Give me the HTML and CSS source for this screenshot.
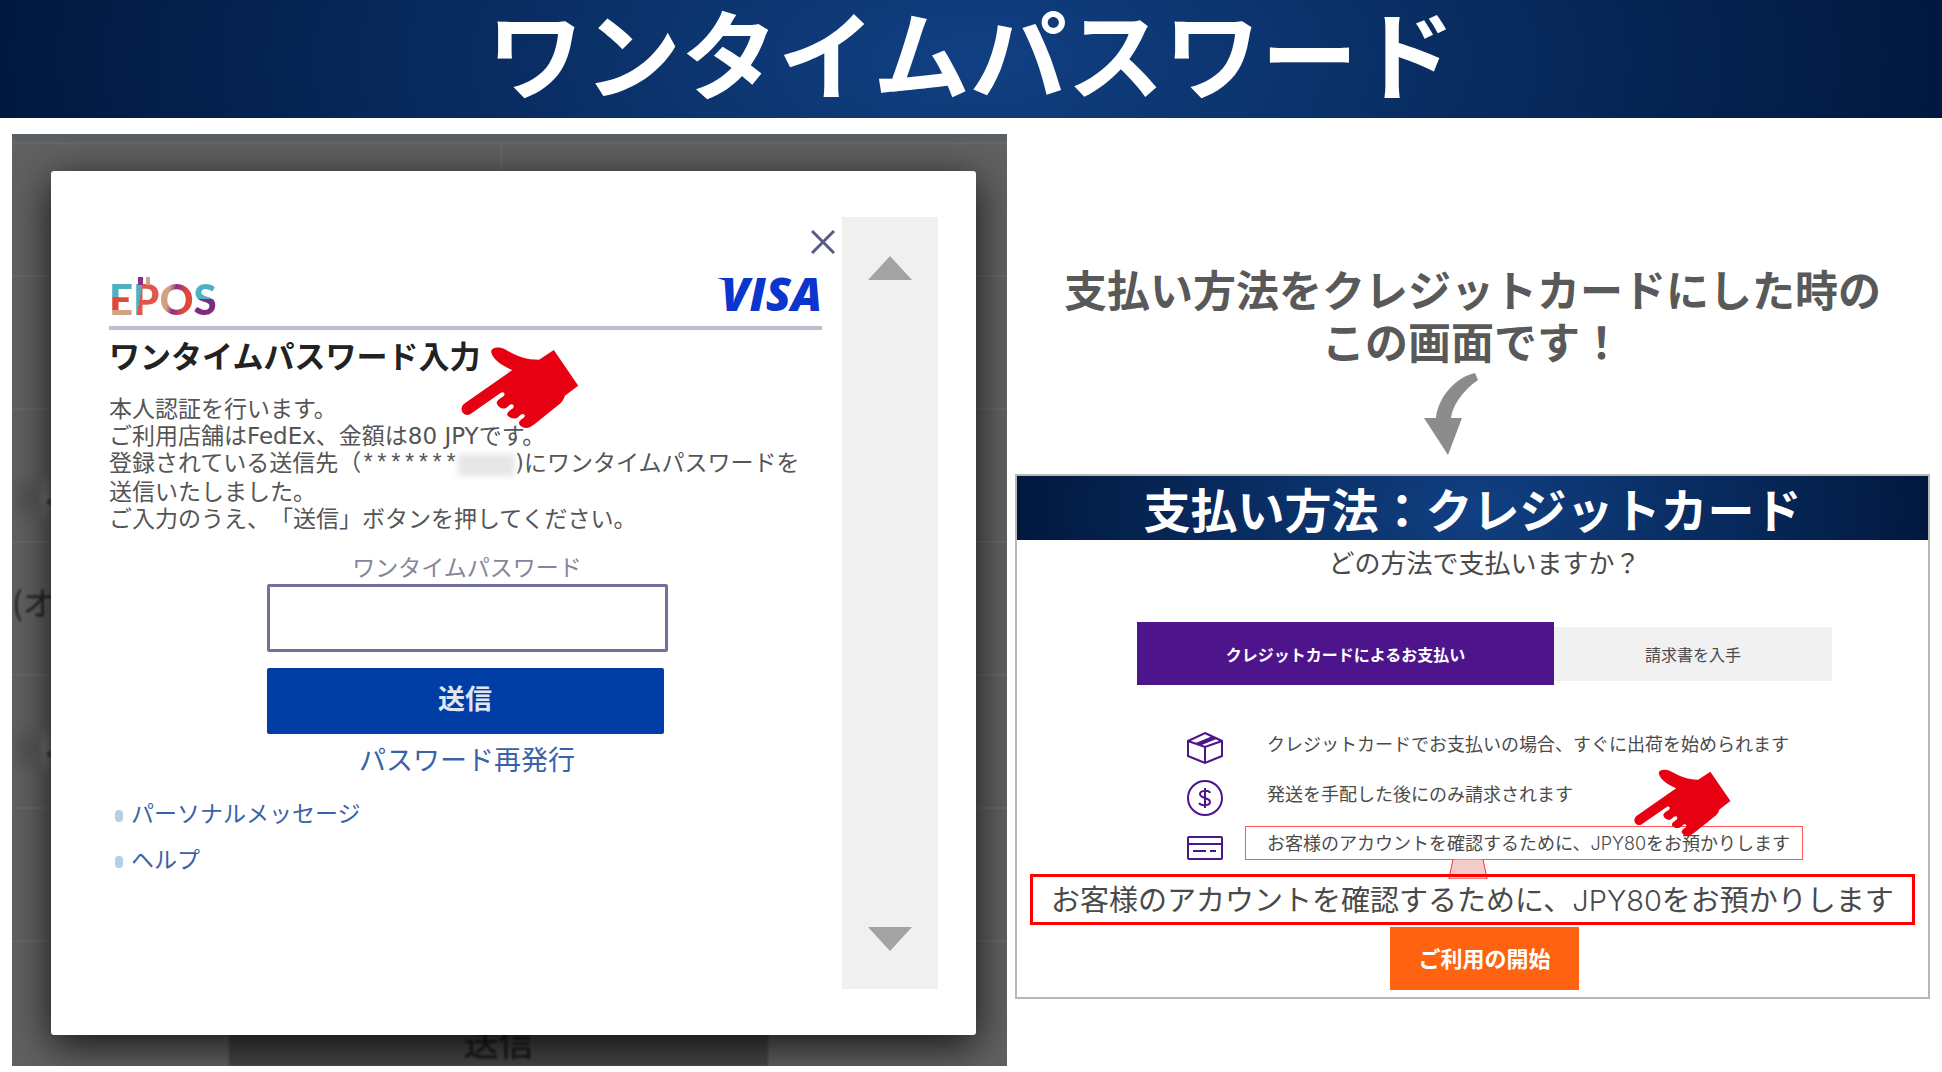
FILE: index.html
```html
<!DOCTYPE html>
<html lang="ja">
<head>
	<meta charset="utf-8">
	<title>ワンタイムパスワード</title>
	<meta name="viewport" content="width=device-width, initial-scale=1">
	<link rel="stylesheet" href="styles.css">
</head>
<body>

	<svg class="symbols" aria-hidden="true">
		<symbol id="hand" viewBox="64 82 352 242">
			<path d="M154 98C152 84 176 79 195 89C230 108 255 120 297 120L341 91L414 198L374 228C371 238 368 243 362 249L285 311C268 325 255 328 242 318C232 309 238 302 252 293C258 285 250 279 243 284L235 291C226 299 210 296 203 287C198 280 206 274 219 265C225 256 217 249 209 255L202 261C192 271 176 264 171 252C168 244 176 238 191 229C198 221 190 214 183 219L92 282C78 292 60 276 67 260Q68 256 74 251L217 151C190 140 160 122 154 98Z"/>
		</symbol>
	</svg>

	<header class="banner">
		<h1>ワンタイムパスワード</h1>
	</header>

	<main class="slide">
		<section class="backdrop">
			<span class="ghost ghost-text">(オ</span>
			<span class="ghost ghost-smudge"></span>
			<span class="ghost ghost-smudge low"></span>
			<span class="ghost ghost-button">送信</span>

			<div class="dialog">
				<div class="dialog-body">
					<button class="close" type="button" aria-label="閉じる">
						<svg viewBox="0 0 24 24"><path d="M1 1L23 23M23 1L1 23"/></svg>
					</button>
					<div class="brands">
						<div class="epos"><span class="e">E</span><span class="p">P</span><span class="o">O</span><span class="s">S</span></div>
						<div class="visa">VISA</div>
					</div>
					<h2><span class="pointed">ワンタイムパスワード入力<svg class="hand"><use href="#hand"/></svg></span></h2>
					<p class="message">本人認証を行います。<br>
						ご利用店舗はFedEx、金額は80 JPYです。<br>
						登録されている送信先（<span class="stars">*******</span><span class="masked"></span>)にワンタイムパスワードを<br>
						送信いたしました。<br>
						ご入力のうえ、「送信」ボタンを押してください。</p>
					<form class="otp">
						<label for="otp">ワンタイムパスワード</label>
						<input id="otp" type="text">
						<button type="button">送信</button>
						<a href="#">パスワード再発行</a>
					</form>
					<ul class="more">
						<li><a href="#">パーソナルメッセージ</a></li>
						<li><a href="#">ヘルプ</a></li>
					</ul>
				</div>
				<div class="scroll">
					<svg viewBox="0 0 44 24"><path d="M22 0L44 24H0Z"/></svg>
					<svg viewBox="0 0 44 24"><path d="M0 0H44L22 24Z"/></svg>
				</div>
			</div>
		</section>

		<section class="guide">
			<p class="caption">支払い方法をクレジットカードにした時の<br>この画面です！</p>
			<svg class="arrow" viewBox="0 0 98 82"><path d="M51 0L54 7C38 18 28 34 27 45H38L24 82L0 45H12C14 24 32 4 51 0Z"/></svg>

			<div class="card">
				<h2>支払い方法：クレジットカード</h2>
				<div class="payment">
					<p class="question">どの方法で支払いますか？</p>
					<div class="tabs">
						<button class="tab active" type="button">クレジットカードによるお支払い</button>
						<button class="tab" type="button">請求書を入手</button>
					</div>
					<ul class="notes">
						<li>
							<svg viewBox="0 0 36 36"><path d="M18 3L35 11V26L18 33L1 26V11ZM1 11L18 17L35 11M18 17V33M9 14L26 7M13 5M12 15L29 8"/></svg>
							<span>クレジットカードでお支払いの場合、すぐに出荷を始められます</span>
						</li>
						<li>
							<svg viewBox="0 0 36 36"><circle cx="18" cy="18" r="17"/><path d="M18 8V28M23 13C22 10 13 10 13 14C13 19 23 17 23 22C23 26 14 26 12 23"/></svg>
							<span>発送を手配した後にのみ請求されます</span>
							<svg class="hand small"><use href="#hand"/></svg>
						</li>
						<li>
							<svg viewBox="0 0 36 36"><rect x="1" y="7" width="34" height="22" rx="1"/><path d="M1 14H35M6 21H19M23 21H29"/></svg>
							<span class="marked">お客様のアカウントを確認するために、<span class="latin">JPY80</span>をお預かりします<svg class="link" viewBox="0 0 40 20"><path d="M5 0H35L39 20H1Z"/></svg></span>
						</li>
					</ul>
				</div>
				<p class="enlarged">お客様のアカウントを確認するために、<span class="latin">JPY80</span>をお預かりします</p>
				<div class="actions">
					<button class="start" type="button">ご利用の開始</button>
				</div>
			</div>
		</section>
	</main>

</body>
</html>
```

FILE: styles.css
```css
:root {
	--navy: radial-gradient(ellipse 52% 400% at 50% 50%, #114083, #00173c);
	--purple: #4d148c;
	--red: #e60012;
}

* { box-sizing: border-box; }

body {
	margin: 0;
	background: #fff;
	font-family: "Noto Sans CJK JP", sans-serif;
	text-spacing-trim: space-all;
}

h1, h2, p, ul { margin: 0; padding: 0; }
ul { list-style: none; }
button { border: 0; padding: 0; font-family: inherit; cursor: pointer; }
svg { display: block; }

.symbols { position: absolute; width: 0; height: 0; }

.hand {
	position: absolute;
	width: 118px;
	height: 81px;
	fill: var(--red);
}

/* title */
.banner {
	padding-bottom: 18px;
	background: var(--navy);
	color: #fff;
	text-align: center;
}

.banner h1 {
	font-size: 97px;
	line-height: 100px;
	font-weight: 700;
}

.slide {
	display: grid;
	grid-template-columns: 995fr 915fr;
	gap: 8px;
	padding: 16px 12px 7px;
	align-items: start;
}

/* left: one time password dialog */
.backdrop {
	position: relative;
	overflow: hidden;
	padding: 37px 31px 31px 39px;
	background:
		linear-gradient(#5a5f66 4px, transparent 10px),
		linear-gradient(#686868, #686868) 488px 0 / 2px 100% no-repeat,
		linear-gradient(#686868 2px, transparent 2px) 0 8px / 100% 133px,
		#616161;
}

.ghost { position: absolute; filter: blur(1px); }
.ghost-text { left: 0; top: 444px; font-size: 32px; color: #222; }
.ghost-smudge {
	left: 0;
	top: 336px;
	width: 40px;
	height: 56px;
	background:
		radial-gradient(3px 4px at 37px 32px, #1c1c1c, transparent),
		radial-gradient(8px 26px at 34px 28px, #777, transparent),
		radial-gradient(20px 28px at 14px 28px, #545454, transparent);
}
.ghost-smudge.low { top: 588px; }
.ghost-button {
	left: 217px;
	right: 239px;
	bottom: 0;
	height: 44px;
	background: #464646;
	color: #1c1c1c;
	font-size: 35px;
	line-height: 38px;
	font-weight: 500;
	text-align: center;
}

.dialog {
	position: relative;
	display: flex;
	padding: 46px 38px 46px 58px;
	border-radius: 3px;
	background: #fff;
	box-shadow: 0 10px 40px rgba(0, 0, 0, .8);
}

.dialog-body {
	flex: 1;
	padding: 13px 20px 117px 0;
}

.close {
	display: block;
	margin: 0 -13px 0 auto;
	width: 24px;
	height: 24px;
	background: none;
}
.close svg { stroke: #5a5a86; stroke-width: 3; }

.brands {
	display: flex;
	justify-content: space-between;
	align-items: center;
	height: 76px;
	padding-top: 6px;
	border-bottom: 4px solid #c0bdd0;
}

.epos { padding-top: 11px; font: 900 42px/48px Lato, sans-serif; }
.epos span {
	position: relative;
	color: transparent;
	-webkit-background-clip: text;
	background-clip: text;
}
.epos .e { background-image: linear-gradient(#4fb0bf 46%, #e0483c 46%, #e0483c 72%, #d2a283 72%); }
.epos .p { background-image: linear-gradient(100deg, #4fb0bf 32%, #e0564a 32%); }
.epos .o { background-image: linear-gradient(100deg, #d2a283 30%, #8c2f83 45%, #e0483c 70%); }
.epos .s { background-image: linear-gradient(#4fb0bf 50%, #7b2b80 50%); }
.epos .p::before {
	content: "";
	position: absolute;
	left: 5px;
	top: 3px;
	width: 12px;
	height: 8px;
	background: linear-gradient(90deg, #8c2f83 5px, transparent 5px, transparent 8px, #d2a283 8px);
}

.visa {
	position: relative;
	color: #0b35cc;
	font: italic 800 46px/48px "Open Sans", sans-serif;
}
.visa::before {
	content: "";
	position: absolute;
	left: -4px;
	top: 9px;
	width: 14px;
	height: 8px;
	background: #0b35cc;
	clip-path: polygon(0 0, 100% 0, 100% 100%, 60% 35%);
}

.dialog h2 {
	padding: 5px 0 6px;
	color: #222;
	font-size: 31px;
	line-height: 40px;
}
.pointed { position: relative; }
.pointed .hand { left: 352px; top: 15px; }

.message {
	padding-top: 15px;
	color: #555;
	font-family: "DejaVu Sans", "Noto Sans CJK JP", sans-serif;
	font-size: 23px;
	line-height: 27px;
	white-space: nowrap;
}
.stars { font-family: "Liberation Mono", monospace; }
.masked {
	display: inline-block;
	width: 57px;
	height: 22px;
	vertical-align: middle;
	background: #e6e6e9;
	filter: blur(3px);
}

.otp {
	display: flex;
	flex-direction: column;
	max-width: 404px;
	margin: 20px auto 0;
	padding-left: 3px;
	font-size: 23px;
	line-height: 27px;
}
.otp label { color: #85859a; text-align: center; }
.otp input {
	height: 68px;
	margin-top: 4px;
	padding: 0 12px;
	border: 3px solid #71719a;
	border-radius: 2px;
	font-size: 31px;
}
.otp button {
	height: 66px;
	margin: 16px 4px 0 0;
	padding-bottom: 8px;
	border-radius: 2px;
	background: #003ea5;
	color: #dfe6f5;
	font-size: 27px;
	font-weight: 700;
}
.otp a {
	margin-top: 10px;
	color: #3a62a8;
	font-size: 27px;
	line-height: 30px;
	text-align: center;
	text-decoration: none;
}

.more {
	display: grid;
	gap: 19px;
	margin: 25px 0 0 6px;
	font-size: 23px;
	line-height: 27px;
}
.more a { color: #3a62a8; text-decoration: none; }
.more a::before {
	content: "";
	display: inline-block;
	width: 8px;
	height: 12px;
	margin-right: 8px;
	border-radius: 4px;
	background: #b5cfe4;
}

.scroll {
	display: flex;
	flex-direction: column;
	justify-content: space-between;
	align-items: center;
	width: 96px;
	padding: 39px 0 38px;
	background: #f0f0f0;
}
.scroll svg { width: 44px; height: 24px; fill: #a3a3a3; }

/* right: payment screen */
.guide { padding-top: 128px; }

.caption {
	color: #595959;
	font-size: 43px;
	line-height: 52px;
	font-weight: 700;
	text-align: center;
	white-space: nowrap;
}

.arrow {
	width: 98px;
	height: 82px;
	margin: 7px auto 19px;
	fill: #8c8c8c;
}

.card {
	border: 2px solid #b8b8b8;
	padding-bottom: 7px;
}

.card h2 {
	background: var(--navy);
	color: #fff;
	font-size: 47px;
	line-height: 64px;
	text-align: center;
}

.payment { padding: 4px 0 0 24px; color: #4a4a4a; }

.question {
	font-size: 26px;
	line-height: 36px;
	text-align: center;
}

.tabs {
	display: flex;
	justify-content: center;
	align-items: center;
	margin-top: 42px;
}
.tab {
	flex: 0 1 278px;
	height: 54px;
	background: #f1f1f1;
	color: #4a4a4a;
	font-size: 16px;
}
.tab.active {
	flex-basis: 417px;
	height: 63px;
	background: var(--purple);
	color: #fff;
	font-weight: 700;
}

.notes {
	width: max-content;
	margin: 33px auto 0;
	padding-left: 8px;
	font-size: 18px;
	line-height: 30px;
}
.notes li {
	position: relative;
	display: flex;
	align-items: center;
	gap: 44px;
	height: 50px;
}
.notes li > svg:first-child {
	width: 36px;
	height: 46px;
	padding-top: 10px;
	fill: none;
	stroke: var(--purple);
	stroke-width: 2;
}
.notes .hand.small { left: 447px; top: 1px; width: 97px; height: 67px; z-index: 1; }

.marked {
	position: relative;
	margin: 0 -13px 0 -22px;
	padding: 0 12px 0 21px;
	border: 1px solid #f55;
}
.marked .link {
	position: absolute;
	left: 202px;
	top: 100%;
	width: 40px;
	height: 20px;
	fill: #f3cccc;
	stroke: #f33;
}

.latin { font-family: Inter, sans-serif; font-weight: 300; }

.enlarged {
	position: relative;
	margin: 6px 13px 0;
	border: 3px solid #f00;
	color: #4a4a4a;
	font-size: 29px;
	line-height: 42px;
	text-align: center;
	white-space: nowrap;
}

.actions { padding-left: 24px; }

.start {
	display: block;
	width: 189px;
	height: 63px;
	margin: 2px auto 0;
	padding-bottom: 3px;
	background: #ff6210;
	color: #fff;
	font-size: 22px;
	font-weight: 700;
}
```
